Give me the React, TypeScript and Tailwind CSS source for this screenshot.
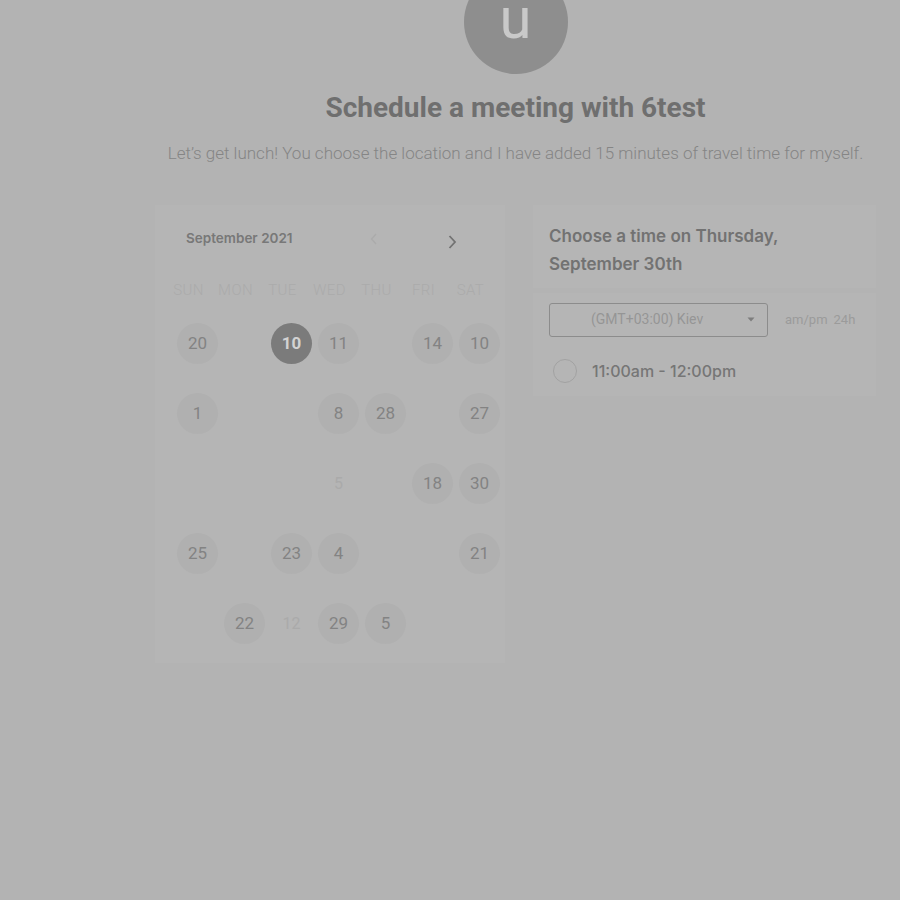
import React from "react";

const weekdays = ["SUN", "MON", "TUE", "WED", "THU", "FRI", "SAT"];

// null = empty cell, "off" days are shown without a circle
type Cell = { day: string; state?: "selected" | "off" } | null;

const weeks: Cell[][] = [
  [{ day: "20" }, null, { day: "10", state: "selected" }, { day: "11" }, null, { day: "14" }, { day: "10" }],
  [{ day: "1" }, null, null, { day: "8" }, { day: "28" }, null, { day: "27" }],
  [null, null, null, { day: "5", state: "off" }, null, { day: "18" }, { day: "30" }],
  [{ day: "25" }, null, { day: "23" }, { day: "4" }, null, null, { day: "21" }],
  [null, { day: "22" }, { day: "12", state: "off" }, { day: "29" }, { day: "5" }, null, null],
];

function DayCell({ cell }: { cell: Cell }) {
  if (!cell) return <div className="h-[70px]" />;
  if (cell.state === "off") {
    return (
      <div className="flex h-[70px] items-center justify-center text-[16px] text-[#aaaaaa]">
        {cell.day}
      </div>
    );
  }
  const selected = cell.state === "selected";
  return (
    <div className="flex h-[70px] items-center justify-center">
      <div
        className={
          selected
            ? "flex h-[41px] w-[41px] items-center justify-center rounded-full bg-[#7b7b7b] text-[17px] font-bold text-[#d2d2d2]"
            : "flex h-[41px] w-[41px] items-center justify-center rounded-full bg-[#b0b0b0] text-[17px] text-[#838383]"
        }
      >
        {cell.day}
      </div>
    </div>
  );
}

function Calendar() {
  return (
    <div className="w-[350px] bg-[#b5b5b5] pt-[20px] pr-[2px] pb-[4px] pl-[19px]">
      <div className="flex h-[28px] items-center pl-[12px]">
        <span className="font-['Inter'] text-[13.5px] font-semibold text-[#787878]">September 2021</span>
        <svg className="ml-[76px]" width="10" height="14" viewBox="0 0 10 14" fill="none">
          <path d="M7 2 L2.5 7 L7 12" stroke="#ababab" strokeWidth="1.3" />
        </svg>
        <svg className="ml-[68px] mt-[6px]" width="10" height="16" viewBox="0 0 10 16" fill="none">
          <path d="M2.5 2 L8 8 L2.5 14" stroke="#727272" strokeWidth="1.8" />
        </svg>
      </div>
      <div className="mt-[26px] -ml-[9px] grid h-[20px] w-[329px] grid-cols-7 items-center text-center text-[15px] font-light tracking-wide text-[#ababab]">
        {weekdays.map((d) => (
          <span key={d}>{d}</span>
        ))}
      </div>
      <div className="mt-[10px] grid w-[329px] grid-cols-7">
        {weeks.map((week, i) =>
          week.map((cell, j) => <DayCell key={`${i}-${j}`} cell={cell} />)
        )}
      </div>
    </div>
  );
}

function TimePanel() {
  return (
    <div className="flex w-[343px] flex-col gap-[5px]">
      <div className="bg-[#b5b5b5] px-[16px] pt-[17px] pb-[10px] font-['Inter'] text-[17px] leading-[28px] font-semibold text-[#727272]">
        Choose a time on Thursday,
        <br />
        September 30th
      </div>
      <div className="bg-[#b5b5b5] px-[16px] pt-[10px] pb-[13px]">
        <div className="flex items-center">
          <div className="flex h-[34px] w-[219px] items-center rounded-[3px] border border-[#8c8c8c] pr-[12px] pl-[41px]">
            <span className="flex-1 text-[14px] text-[#959595]">(GMT+03:00) Kiev</span>
            <svg width="8" height="5" viewBox="0 0 8 5">
              <path d="M0.5 0.5 L7.5 0.5 L4 4.5 Z" fill="#7d7d7d" />
            </svg>
          </div>
          <span className="ml-[17px] text-[13px] text-[#9b9b9b]">am/pm</span>
          <span className="ml-[6px] text-[13px] text-[#9b9b9b]">24h</span>
        </div>
        <div className="mt-[22px] flex items-center">
          <div className="ml-[4px] h-[24px] w-[24px] rounded-full border border-[#a2a2a2]" />
          <span className="ml-[15px] font-['Inter'] text-[16px] font-medium text-[#767676]">
            11:00am - 12:00pm
          </span>
        </div>
      </div>
    </div>
  );
}

export default function App() {
  return (
    <div className="h-[900px] w-[900px] overflow-hidden bg-[#b3b3b3] font-['Roboto',sans-serif]">
      <div className="flex w-[1031px] flex-col items-center">
        <div className="-mt-[30px] flex h-[104px] w-[104px] items-center justify-center rounded-full bg-[#8e8e8e]">
          <span className="-mt-[8px] text-[58px] leading-none text-[#c9c9c9]">u</span>
        </div>
        <h1 className="mt-[13px] text-[28px] font-bold text-[#6f6f6f]">Schedule a meeting with 6test</h1>
        <p className="mt-[12px] text-[17px] font-light text-[#858585]">
          Let’s get lunch! You choose the location and I have added 15 minutes of travel time for myself.
        </p>
        <div className="mt-[38px] flex items-start gap-[28px]">
          <Calendar />
          <TimePanel />
        </div>
      </div>
    </div>
  );
}
